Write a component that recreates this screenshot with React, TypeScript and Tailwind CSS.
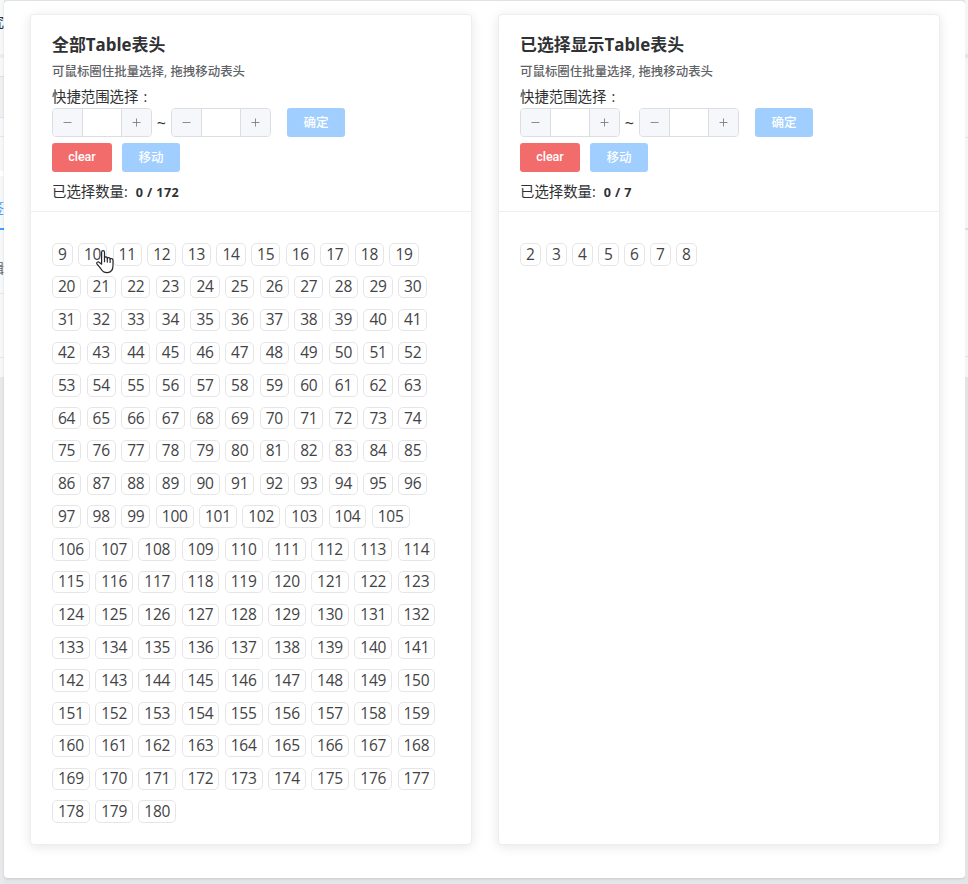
import React from "react";

const CJK = "font-['Open_Sans','Noto_Sans_CJK_SC',sans-serif]";

function Stepper() {
  return (
    <div className="flex h-[29px] w-[99.5px] overflow-hidden rounded-[4px] border border-[#dcdfe2] bg-white text-[#7d8087]">
      <div className="flex w-[30px] items-center justify-center border-r border-[#dcdfe2] bg-[#f5f7fa]">
        <svg width="9" height="9" viewBox="0 0 9 9" fill="none" stroke="currentColor" strokeWidth="0.9">
          <path d="M0.5 4.5H8.5" />
        </svg>
      </div>
      <div className="flex-1" />
      <div className="flex w-[30px] items-center justify-center border-l border-[#dcdfe2] bg-[#f5f7fa]">
        <svg width="9" height="9" viewBox="0 0 9 9" fill="none" stroke="currentColor" strokeWidth="0.9">
          <path d="M0.5 4.5H8.5M4.5 0.5V8.5" />
        </svg>
      </div>
    </div>
  );
}

function Button({ children, tone }: { children: React.ReactNode; tone: "blue" | "red" }) {
  return (
    <button
      className={
        "flex h-[29px] items-center justify-center rounded-[3px] text-[12.5px] leading-none font-medium text-white " +
        (tone === "blue"
          ? "w-[58px] bg-[#a0cfff] pb-px font-['Noto_Sans_CJK_SC',sans-serif]"
          : "w-[60px] bg-[#f36c6c] pb-px font-['Roboto',sans-serif]")
      }
    >
      {children}
    </button>
  );
}

function Tag({ n }: { n: number }) {
  const width = n < 10 ? "w-[20.6px]" : n < 100 ? "w-[29.22px]" : "w-[37.8px]";
  return (
    <div
      className={
        "flex h-[22.4px] items-center justify-center rounded-[5px] border border-[#e6e6e8] text-[15.5px] leading-none tracking-[-0.25px] text-[#434345] " +
        width
      }
    >
      {n}
    </div>
  );
}

function Panel({ title, total, from, to }: { title: string; total: number; from: number; to: number }) {
  const items = Array.from({ length: to - from + 1 }, (_, i) => from + i);
  return (
    <section className="h-[831px] w-[442px] rounded-[4px] border border-[#eeeeef] bg-white shadow-[0_2px_12px_rgba(0,0,0,0.1)]">
      <header className="h-[197px] border-b border-[#eeeeef] pt-[18px] pl-[21px] text-[#303133]">
        <h2 className="h-[24px] text-[16.9px] leading-[24px] font-bold whitespace-nowrap">{title}</h2>
        <p className="mt-[6px] h-[18px] text-[12.45px] leading-[18px] font-medium whitespace-nowrap text-[#606266]">
          可鼠标圈住批量选择, 拖拽移动表头
        </p>
        <p className="mt-[5px] h-[21px] text-[14.4px] leading-[21px] whitespace-nowrap">
          快捷范围选择<span className="ml-[1.5px]"> :</span>
        </p>
        <div className="mt-px flex items-center">
          <Stepper />
          <span className="w-[19.5px] text-center text-[16px] leading-none">~</span>
          <Stepper />
          <div className="ml-[16.5px]">
            <Button tone="blue">确定</Button>
          </div>
        </div>
        <div className="mt-[6px] flex gap-[10px]">
          <Button tone="red">clear</Button>
          <Button tone="blue">移动</Button>
        </div>
        <div className="mt-[9px] flex h-[22px] items-center text-[14.4px] leading-[22px] whitespace-nowrap">
          已选择数量:
          <span className="ml-[8px] pt-px text-[12.6px] font-bold tracking-[0.4px]">0 / {total}</span>
        </div>
      </header>
      <div className="flex flex-wrap gap-x-[5.4px] gap-y-[10.4px] pt-[31.2px] pr-[21px] pl-[21px]">
        {items.map((n) => (
          <Tag key={n} n={n} />
        ))}
      </div>
    </section>
  );
}

function LeftEdge() {
  return (
    <div className="flex h-[884px] w-[4px] shrink-0 flex-col overflow-hidden bg-[#f7f8fa]">
      <div className="mt-[12px] flex h-[20px] w-[4px] justify-end text-[14px] leading-[20px] text-[#303133]">究</div>
      <div className="mt-[22px] h-[4px] bg-[#eceef0]" />
      <div className="h-[19px] border-b border-[#dddfe3]" />
      <div className="h-[41px] border-b border-[#e0e5ec] bg-[#eef0f2]" />
      <div className="h-[19px] border-b border-[#e4e7ed]" />
      <div className="h-[34px]" />
      <div className="h-[5px] bg-white" />
      <div className="mt-[22px] flex h-[30px] w-[4px] justify-end text-[14px] leading-[20px] text-[#409eff]">签</div>
      <div className="h-[2px] shrink-0 bg-[#409eff]" />
      <div className="mt-[28px] flex h-[20px] w-[4px] justify-end text-[13px] leading-[20px] text-[#606266]">辑</div>
      <div className="mt-[15px] h-[50px] border-t border-[#e4e7ed]" />
      <div className="mt-[14px] h-[20px] border-t border-[#e4e7ed]" />
      <div className="flex-1 bg-[#e8e9ea]" />
    </div>
  );
}

function RightEdge() {
  return (
    <div className="flex h-[884px] w-[3px] shrink-0 flex-col bg-[#f4f5f5]">
      <div className="mt-[54px] h-[4px] bg-[#e4e5e6]" />
      <div className="mt-[79px] h-px bg-[#e4e5e6]" />
      <div className="mt-[90px] h-[2px] bg-[#dcdddf]" />
      <div className="mt-[126px] h-px bg-[#e0e1e3]" />
      <div className="mt-[20px] flex-1 bg-[#e2e4e5]" />
    </div>
  );
}

function HandCursor() {
  return (
    <svg
      className="absolute top-[249px] left-[96px]"
      width="19"
      height="25"
      viewBox="0 0 19 25"
      fill="#ffffff"
      stroke="#26262a"
      strokeWidth="1.2"
      strokeLinejoin="round"
      strokeLinecap="round"
    >
      <path d="M5.6 15.2V3.2c0-2.2 2.9-2.2 2.9 0v5.5c.4-1.3 2.7-1.1 2.8.5.6-1 2.7-.7 2.8.8.6-.9 2.9-.5 2.9 1.2v5.3c0 4.3-2.3 7.1-5.9 7.1-3.4 0-5-1.6-6.3-3.9L.9 14.9c-.8-1.5 1-2.7 2.3-1.6z" />
      <path d="M8.5 8.5v4.2M11.3 9.2v3.9M14.1 10v3.4" fill="none" />
    </svg>
  );
}

export default function App() {
  return (
    <div className={"relative flex h-[884px] w-[968px] overflow-hidden bg-[#e4e7e9] " + CJK}>
      <LeftEdge />
      <main className="mt-px flex h-[877px] w-[961px] shrink-0 gap-[26px] rounded-[4px] bg-white pt-[13px] pl-[26px] shadow-[0_1px_3px_rgba(0,0,0,0.12)]">
        <Panel title="全部Table表头" total={172} from={9} to={180} />
        <Panel title="已选择显示Table表头" total={7} from={2} to={8} />
      </main>
      <RightEdge />
      <HandCursor />
    </div>
  );
}
